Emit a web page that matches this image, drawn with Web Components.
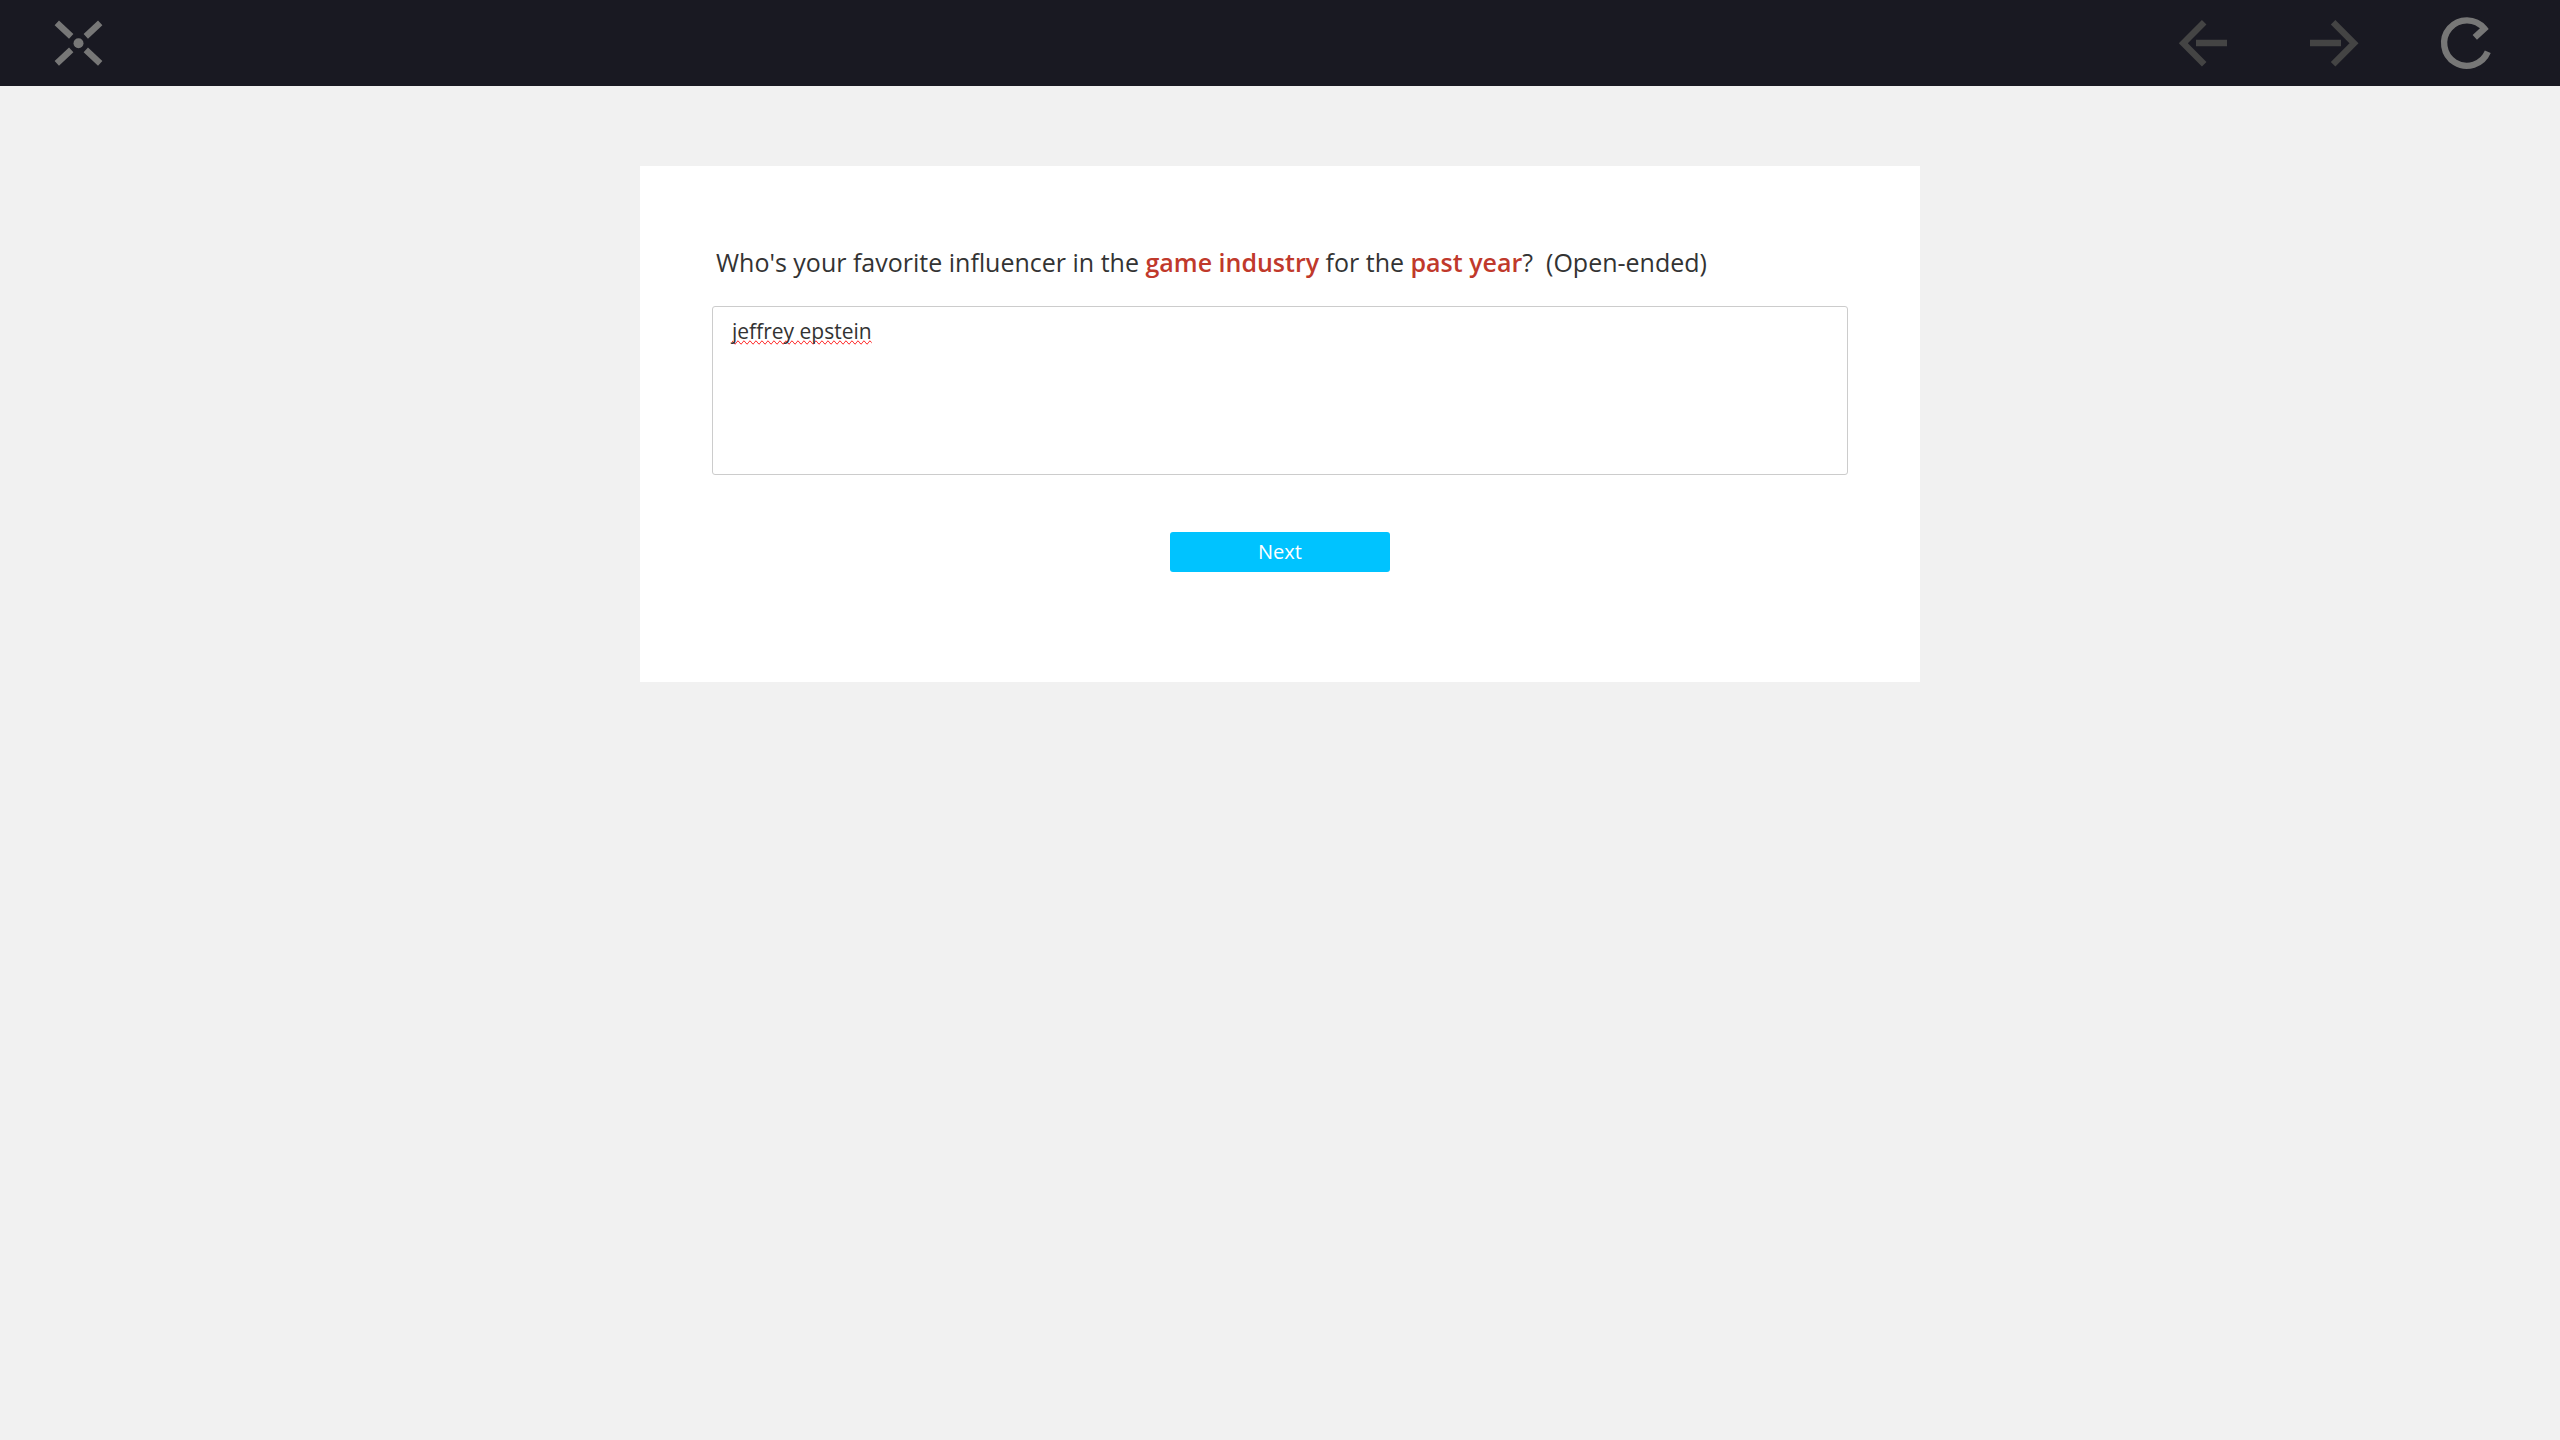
<!DOCTYPE html>
<html lang="en">
<head>
<meta charset="utf-8">
<title>Survey</title>
<style>
  body { margin: 0; min-height: 100vh; background: #f1f1f1; color: #333; font-family: "Open Sans", "Noto Sans", sans-serif; }
</style>
</head>
<body>
<survey-app></survey-app>
<script>
class NavButton extends HTMLElement {
  connectedCallback() {
    const icons = {
      close: '<path d="M9.8 11.9 24.2 25.3M53.2 11.9 38.8 25.3M9.8 52.3 24.2 38.9M53.2 52.3 38.8 38.9"/><circle cx="31.5" cy="32.2" r="5" fill="currentColor" stroke="none"/>',
      back: '<path d="M33.2 11.2 12.3 32.2 33.2 53.2M25 32H56"/>',
      forward: '<path d="M30.1 11.2 51 32.2 30.1 53.2M7 32H38"/>',
      reload: '<path d="M52.8 40.8A22.7 22.7 0 1 1 49.3 17.6L39.8 26.4"/>'
    };
    const off = this.hasAttribute('disabled');
    const root = this.attachShadow({ mode: 'open' });
    root.innerHTML = `
      <style>
        :host { display: block; color: #777; }
        :host([disabled]) { color: #444; }
        button { display: block; border: 0; padding: 0; background: none; color: inherit; cursor: pointer; }
        button:disabled { cursor: default; }
        svg { display: block; width: 64px; height: 64px; fill: none; stroke: currentColor; stroke-width: 6.4; stroke-miterlimit: 10; }
      </style>
      <button type="button" aria-label="${this.getAttribute('label')}" ${off ? 'disabled' : ''}>
        <svg viewBox="0 0 64 64" aria-hidden="true">${icons[this.getAttribute('icon')]}</svg>
      </button>`;
  }
}
customElements.define('nav-button', NavButton);

class TopBar extends HTMLElement {
  connectedCallback() {
    this.attachShadow({ mode: 'open' }).innerHTML = `
      <style>
        :host { display: block; background: #191922; }
        header { display: flex; justify-content: space-between; padding: 11px 61px 11px 47px; }
        nav { display: flex; gap: 68px; }
      </style>
      <header>
        <slot name="start"></slot>
        <nav><slot></slot></nav>
      </header>`;
  }
}
customElements.define('top-bar', TopBar);

class QuestionCard extends HTMLElement {
  connectedCallback() {
    this.attachShadow({ mode: 'open' }).innerHTML = `
      <style>
        :host { display: block; background: #fff; }
        form { display: flex; flex-direction: column; padding: 78px 72px 110px; }
        label { padding: 0 4px; margin-bottom: 26px; font-size: 25px; line-height: 36px; }
        strong { color: #c0392b; font-weight: 600; }
        textarea {
          box-sizing: border-box; width: 100%; height: 169px; margin: 0; padding: 9px 19px;
          border: 1px solid #ccc; border-radius: 3px; outline: 0; resize: none; background: #fff;
          color: #333; font: 21px/30px "Open Sans", "Noto Sans", sans-serif;
          text-decoration: underline wavy red 1px; text-decoration-line: spelling-error;
        }
        button {
          align-self: center; width: 220px; height: 40px; margin-top: 57px; padding: 0;
          border: 0; border-radius: 3px; background: #00c3ff; color: #fff;
          font: 20px/40px "Open Sans", "Noto Sans", sans-serif; cursor: pointer;
        }
      </style>
      <form>
        <label for="answer">Who's your favorite influencer in the <strong>game industry</strong> for the <strong>past year</strong>?&nbsp; (Open-ended)</label>
        <textarea id="answer" spellcheck="false">jeffrey epstein</textarea>
        <button type="button">Next</button>
      </form>`;
  }
}
customElements.define('question-card', QuestionCard);

class SurveyApp extends HTMLElement {
  connectedCallback() {
    this.attachShadow({ mode: 'open' }).innerHTML = `
      <style>
        :host { display: block; }
        main { display: flex; justify-content: center; padding: 80px 0; }
        question-card { width: 50%; }
      </style>
      <top-bar>
        <nav-button slot="start" icon="close" label="Close"></nav-button>
        <nav-button icon="back" label="Back" disabled></nav-button>
        <nav-button icon="forward" label="Forward" disabled></nav-button>
        <nav-button icon="reload" label="Reload"></nav-button>
      </top-bar>
      <main><question-card></question-card></main>`;
  }
}
customElements.define('survey-app', SurveyApp);
</script>
</body>
</html>
